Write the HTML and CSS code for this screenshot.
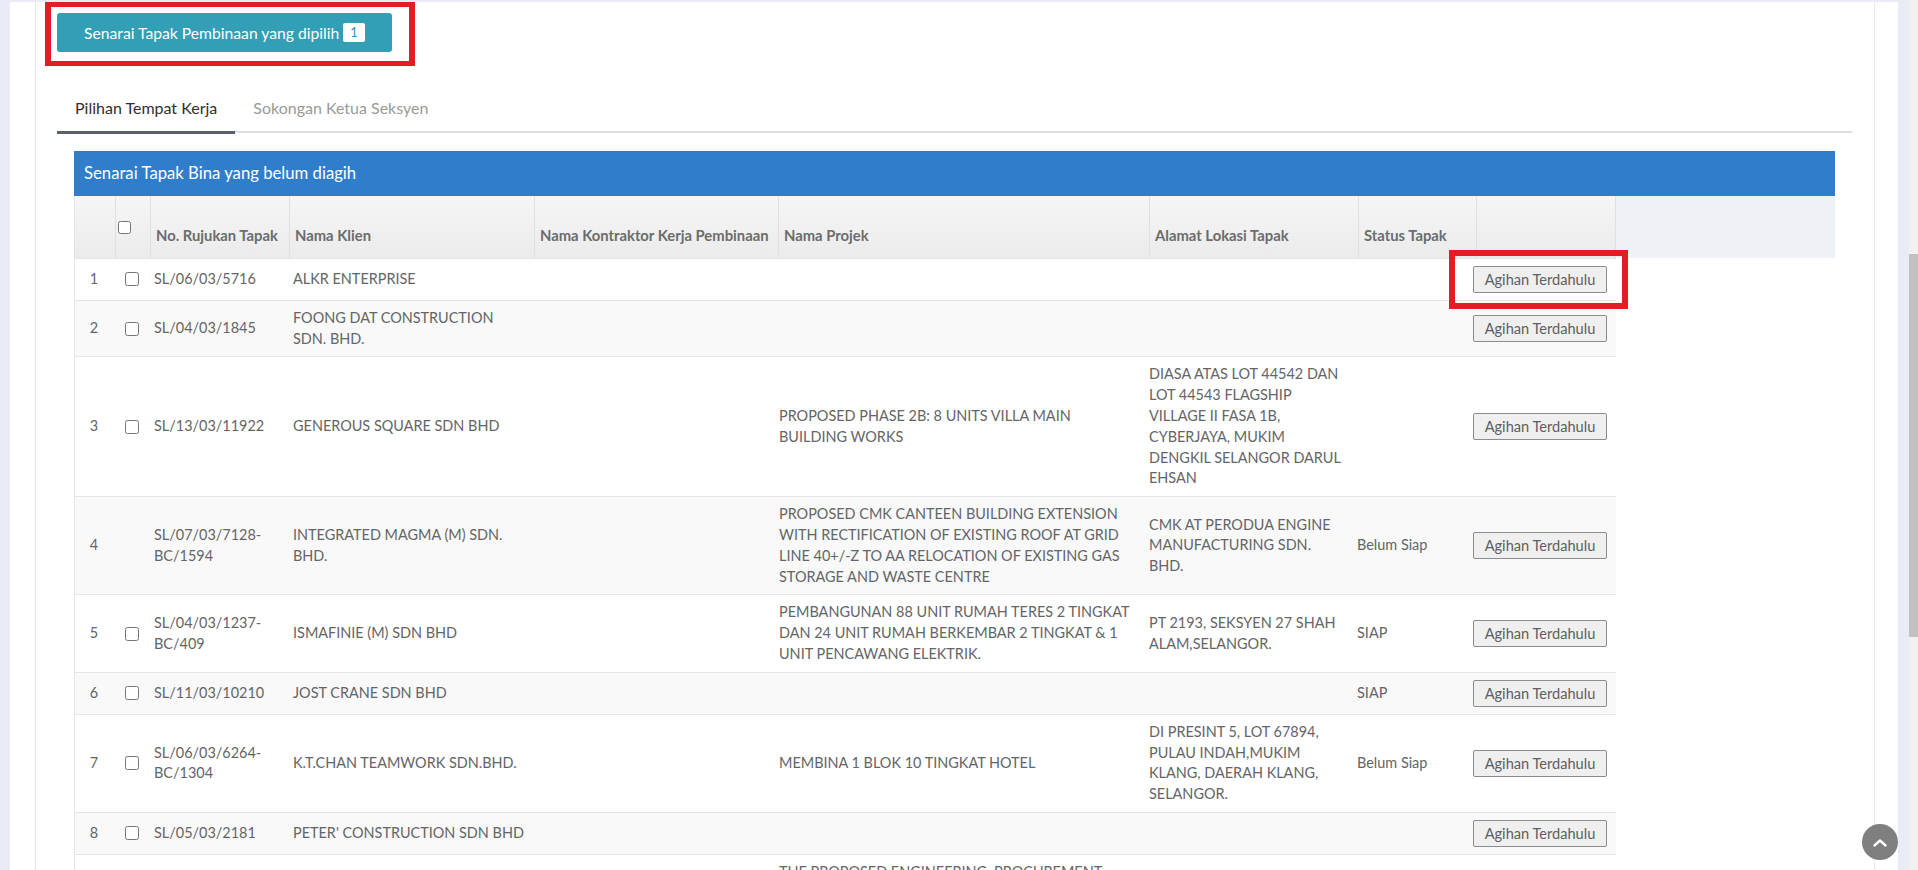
FILE: index.html
```html
<!DOCTYPE html>
<html lang="ms">
<head>
<meta charset="utf-8">
<title>Senarai Tapak Bina</title>
<link rel="stylesheet" href="styles.css">
</head>
<body>
<div class="wrapper">
  <div class="card">
    <button class="btn-selected" type="button">Senarai Tapak Pembinaan yang dipilih <span class="badge">1</span></button>
    <div class="tabs">
      <div class="tab active">Pilihan Tempat Kerja</div>
      <div class="tab">Sokongan Ketua Seksyen</div>
    </div>
    <div class="tab-content">
      <div class="panel">
        <div class="panel-heading">Senarai Tapak Bina yang belum diagih</div>
        <div class="scroll-head">
          <table class="thead-table">
            <colgroup>
              <col class="h1"><col class="h2"><col class="h3"><col class="h4"><col class="h5"><col class="h6"><col class="h7"><col class="h8"><col class="h9">
            </colgroup>
            <thead>
              <tr>
                <th></th>
                <th class="th-cb"><input type="checkbox"></th>
                <th>No. Rujukan Tapak</th>
                <th>Nama Klien</th>
                <th>Nama Kontraktor Kerja Pembinaan</th>
                <th>Nama Projek</th>
                <th>Alamat Lokasi Tapak</th>
                <th>Status Tapak</th>
                <th></th>
              </tr>
            </thead>
          </table>
        </div>
        <div class="scroll-body">
          <table class="tbody-table">
            <colgroup>
              <col class="b1"><col class="b2"><col class="b3"><col class="b4"><col class="b5"><col class="b6"><col class="b7"><col class="b8"><col class="b9">
            </colgroup>
            <tbody>
              <tr>
                <td class="num">1</td>
                <td><input type="checkbox"></td>
                <td>SL/06/03/5716</td>
                <td>ALKR ENTERPRISE</td>
                <td></td>
                <td></td>
                <td></td>
                <td></td>
                <td><button class="btn-agihan" type="button">Agihan Terdahulu</button></td>
              </tr>
              <tr>
                <td class="num">2</td>
                <td><input type="checkbox"></td>
                <td>SL/04/03/1845</td>
                <td>FOONG DAT CONSTRUCTION<br>SDN. BHD.</td>
                <td></td>
                <td></td>
                <td></td>
                <td></td>
                <td><button class="btn-agihan" type="button">Agihan Terdahulu</button></td>
              </tr>
              <tr>
                <td class="num">3</td>
                <td><input type="checkbox"></td>
                <td>SL/13/03/11922</td>
                <td>GENEROUS SQUARE SDN BHD</td>
                <td></td>
                <td>PROPOSED PHASE 2B: 8 UNITS VILLA MAIN<br>BUILDING WORKS</td>
                <td>DIASA ATAS LOT 44542 DAN<br>LOT 44543 FLAGSHIP<br>VILLAGE II FASA 1B,<br>CYBERJAYA, MUKIM<br>DENGKIL SELANGOR DARUL<br>EHSAN</td>
                <td></td>
                <td><button class="btn-agihan" type="button">Agihan Terdahulu</button></td>
              </tr>
              <tr>
                <td class="num">4</td>
                <td></td>
                <td>SL/07/03/7128-<br>BC/1594</td>
                <td>INTEGRATED MAGMA (M) SDN.<br>BHD.</td>
                <td></td>
                <td>PROPOSED CMK CANTEEN BUILDING EXTENSION<br>WITH RECTIFICATION OF EXISTING ROOF AT GRID<br>LINE 40+/-Z TO AA RELOCATION OF EXISTING GAS<br>STORAGE AND WASTE CENTRE</td>
                <td>CMK AT PERODUA ENGINE<br>MANUFACTURING SDN.<br>BHD.</td>
                <td>Belum Siap</td>
                <td><button class="btn-agihan" type="button">Agihan Terdahulu</button></td>
              </tr>
              <tr>
                <td class="num">5</td>
                <td><input type="checkbox"></td>
                <td>SL/04/03/1237-<br>BC/409</td>
                <td>ISMAFINIE (M) SDN BHD</td>
                <td></td>
                <td>PEMBANGUNAN 88 UNIT RUMAH TERES 2 TINGKAT<br>DAN 24 UNIT RUMAH BERKEMBAR 2 TINGKAT &amp; 1<br>UNIT PENCAWANG ELEKTRIK.</td>
                <td>PT 2193, SEKSYEN 27 SHAH<br>ALAM,SELANGOR.</td>
                <td>SIAP</td>
                <td><button class="btn-agihan" type="button">Agihan Terdahulu</button></td>
              </tr>
              <tr>
                <td class="num">6</td>
                <td><input type="checkbox"></td>
                <td>SL/11/03/10210</td>
                <td>JOST CRANE SDN BHD</td>
                <td></td>
                <td></td>
                <td></td>
                <td>SIAP</td>
                <td><button class="btn-agihan" type="button">Agihan Terdahulu</button></td>
              </tr>
              <tr>
                <td class="num">7</td>
                <td><input type="checkbox"></td>
                <td>SL/06/03/6264-<br>BC/1304</td>
                <td>K.T.CHAN TEAMWORK SDN.BHD.</td>
                <td></td>
                <td>MEMBINA 1 BLOK 10 TINGKAT HOTEL</td>
                <td>DI PRESINT 5, LOT 67894,<br>PULAU INDAH,MUKIM<br>KLANG, DAERAH KLANG,<br>SELANGOR.</td>
                <td>Belum Siap</td>
                <td><button class="btn-agihan" type="button">Agihan Terdahulu</button></td>
              </tr>
              <tr>
                <td class="num">8</td>
                <td><input type="checkbox"></td>
                <td>SL/05/03/2181</td>
                <td>PETER' CONSTRUCTION SDN BHD</td>
                <td></td>
                <td></td>
                <td></td>
                <td></td>
                <td><button class="btn-agihan" type="button">Agihan Terdahulu</button></td>
              </tr>
              <tr>
                <td class="num">9</td>
                <td><input type="checkbox"></td>
                <td>SL/10/03/3315</td>
                <td>SUNWAY CONSTRUCTION SDN BHD</td>
                <td></td>
                <td>THE PROPOSED ENGINEERING, PROCUREMENT,<br>CONSTRUCTION AND COMMISSIONING OF<br>WATER TREATMENT PLANT AND ASSOCIATED<br>WORKS</td>
                <td>LOT 12345, MUKIM<br>SEPANG, SELANGOR.</td>
                <td>Belum Siap</td>
                <td><button class="btn-agihan" type="button">Agihan Terdahulu</button></td>
              </tr>
            </tbody>
          </table>
        </div>
      </div>
    </div>
  </div>
</div>

<div class="hl hl-1"></div>
<div class="hl hl-2"></div>

<div class="scrollbar"><div class="thumb"></div></div>
<div class="to-top">
  <svg width="14" height="14" viewBox="0 0 14 14"><path d="M1.5 9.5 L7 4.5 L12.5 9.5" fill="none" stroke="#fff" stroke-width="2.4" stroke-linecap="round" stroke-linejoin="round"/></svg>
</div>
</body>
</html>
```

FILE: styles.css
```css
html, body {
  margin: 0;
  height: 870px;
  overflow: hidden;
}
body {
  background: #e9ecf4;
  font-family: Lato, "Liberation Sans", sans-serif;
  font-size: 14.45px;
  line-height: 20.8px;
  color: #676a6c;
}
.wrapper {
  margin: 2px 0 0 10px;
  width: 1888px;
  height: 868px;
  background: #fff;
  box-sizing: border-box;
  padding: 0 23px 0 25px;
}
.card {
  height: 100%;
  box-sizing: border-box;
  border-left: 1px solid #e7eaec;
  border-right: 1px solid #e7eaec;
  padding: 11px 22px 0 21px;
}
.btn-selected {
  display: inline-flex;
  align-items: center;
  gap: 4px;
  height: 39px;
  padding: 0 27px;
  background: #329fb6;
  border: 0;
  border-radius: 3px;
  color: #fff;
  font-family: inherit;
  font-size: 15.7px;
}
.badge {
  display: inline-block;
  height: 19px;
  line-height: 19px;
  padding: 0 7px;
  background: #fff;
  color: #3d8fc2;
  font-size: 13px;
  border-radius: 2px;
}
.tabs {
  display: flex;
  align-items: flex-start;
  margin-top: 36px;
  border-bottom: 2px solid #dedede;
  font-size: 16px;
}
.tab {
  padding: 10px 18px 12px;
  margin-bottom: -3px;
  border-bottom: 3px solid transparent;
  color: #9a9a9a;
}
.tab.active {
  color: #2f2f2f;
  border-bottom-color: #59616e;
}
.tab-content {
  padding: 18px 17px 0;
}
.panel-heading {
  height: 45px;
  display: flex;
  align-items: center;
  padding: 0 10px;
  background: #307ecb;
  color: #fff;
  font-size: 16.7px;
}
.scroll-head {
  background: #eef1f6;
}
table {
  border-collapse: separate;
  border-spacing: 0;
  table-layout: fixed;
  width: 1542px;
}
.h1 { width: 42px; }
.h2 { width: 35px; }
.h3 { width: 139px; }
.h4 { width: 245px; }
.h5 { width: 244px; }
.h6 { width: 371px; }
.h7 { width: 209px; }
.h8 { width: 118px; }
.h9 { width: 139px; }
.b1 { width: 39px; }
.b2 { width: 33px; }
.b3 { width: 139px; }
.b4 { width: 245px; }
.b5 { width: 241px; }
.b6 { width: 370px; }
.b7 { width: 208px; }
.b8 { width: 116px; }
.b9 { width: 151px; }
.thead-table tr {
  height: 62px;
}
.thead-table th {
  background: linear-gradient(#f6f6f6, #ebebeb);
  border-right: 1px solid #e0e0e0;
  padding: 0 5px 12px;
  vertical-align: bottom;
  text-align: left;
  font-weight: 700;
  font-size: 14.8px;
  color: #6a6c6e;
  white-space: nowrap;
  overflow: hidden;
}
.thead-table th:first-child {
  border-left: 1px solid #e3e3e3;
}
.thead-table th.th-cb {
  vertical-align: top;
  padding: 25px 0 0 2px;
}
.th-cb input {
  display: block;
  margin: 0;
  width: 13px;
  height: 13px;
}
.tbody-table td {
  border-top: 1px solid #e5e5e5;
  padding: 7px 8px;
  vertical-align: middle;
  white-space: nowrap;
  color: #636567;
}
.tbody-table td:first-child {
  border-left: 1px solid #e5e5e5;
}
.tbody-table tr:nth-child(even) td {
  background: #f9f9f9;
}
.tbody-table td.num {
  text-align: center;
  padding: 7px 0;
}
.tbody-table td input {
  display: block;
  margin: 0 0 0 4px;
  width: 14px;
  height: 14px;
}
.btn-agihan {
  display: block;
  width: 134px;
  height: 27px;
  padding: 0;
  background: #efefef;
  border: 1px solid #8c8c8c;
  border-radius: 2px;
  color: #5d5e60;
  font-family: inherit;
  font-size: 14.6px;
}
.hl {
  position: absolute;
  box-sizing: border-box;
  border: 5px solid #e31d24;
}
.hl-1 {
  left: 45px;
  top: 2px;
  width: 370px;
  height: 64px;
  border-left-width: 6px;
  border-right-width: 6px;
}
.hl-2 {
  left: 1449px;
  top: 250px;
  width: 179px;
  height: 59px;
  border-width: 6px;
}
.scrollbar {
  position: fixed;
  top: 0;
  right: 0;
  width: 9px;
  height: 870px;
  background: #f1f1f1;
}
.thumb {
  position: absolute;
  left: 0;
  right: 0;
  top: 254px;
  height: 383px;
  background: #c1c1c1;
}
.to-top {
  position: fixed;
  left: 1862px;
  top: 824px;
  width: 36px;
  height: 36px;
  border-radius: 50%;
  background: #7f7f7f;
  display: flex;
  align-items: center;
  justify-content: center;
}
.to-top svg {
  margin-top: 1px;
}
```
